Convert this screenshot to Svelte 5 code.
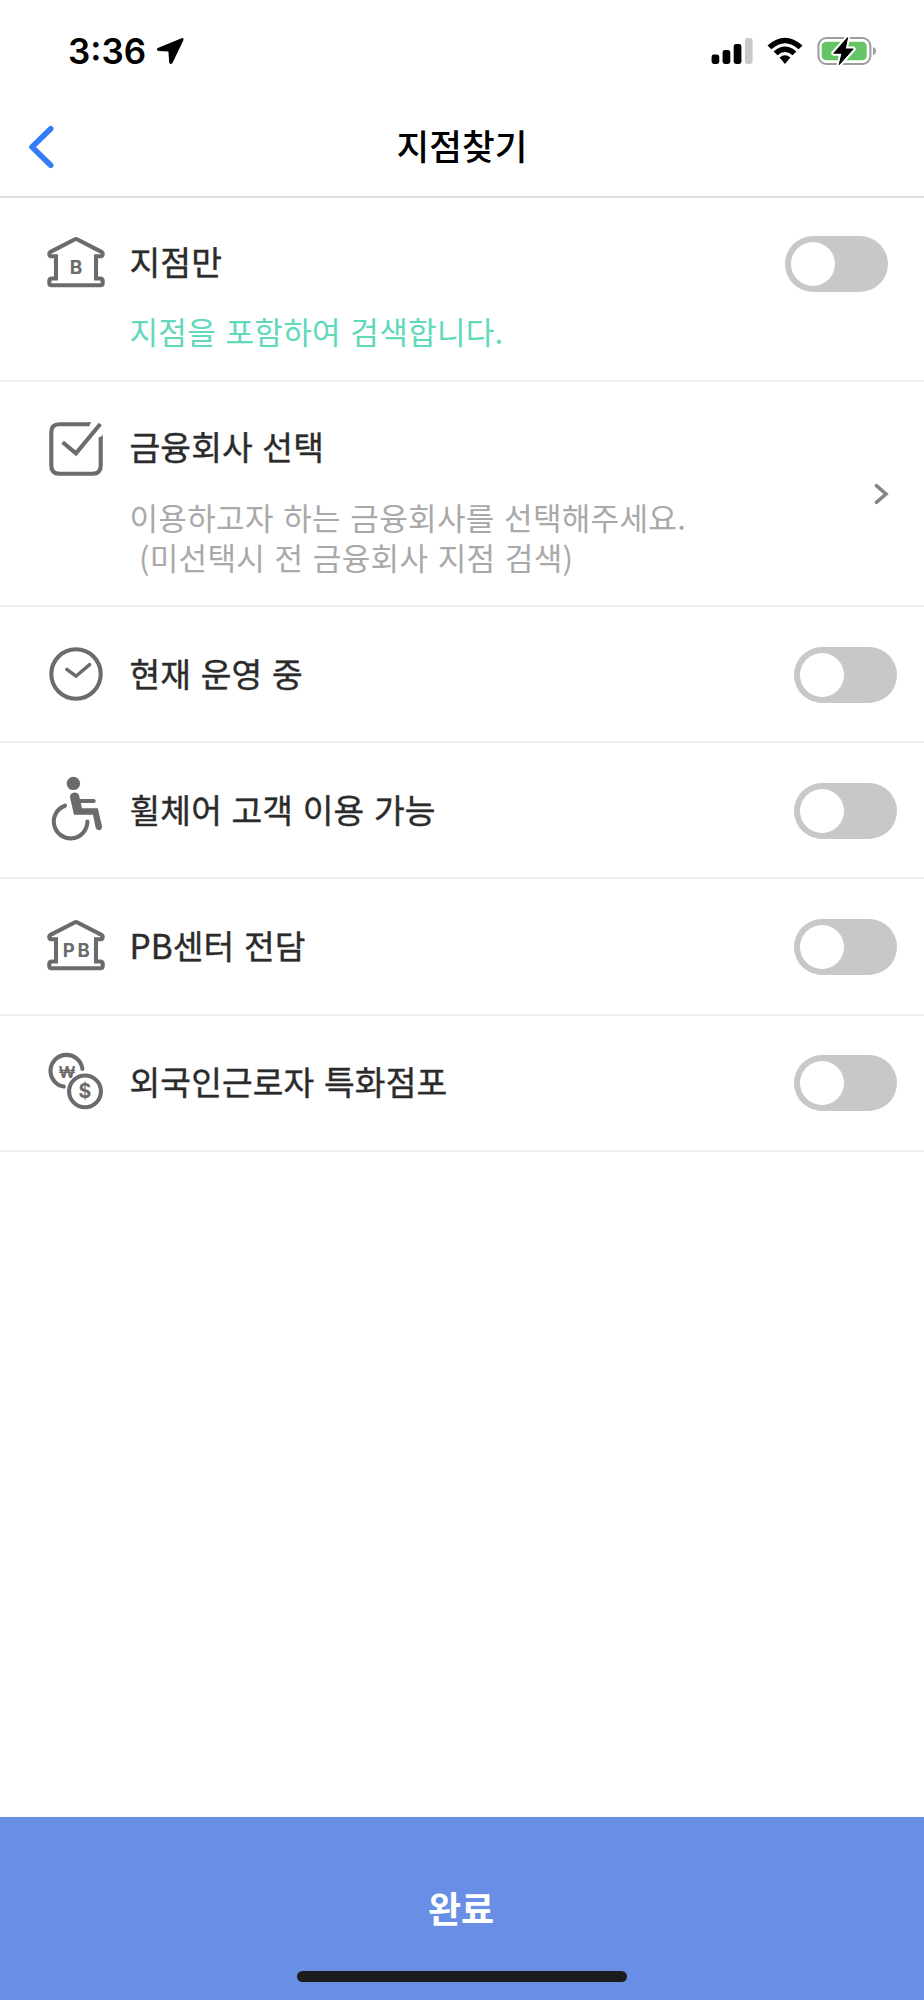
<script lang="ts">
    type Icon = 'branch' | 'check' | 'clock' | 'wheelchair' | 'pb' | 'coins';
    type Filter = { id: Icon; title: string; note?: string };

    const branch: Filter = { id: 'branch', title: '지점만', note: '지점을 포함하여 검색합니다.' };
    const filters: Filter[] = [
        { id: 'clock', title: '현재 운영 중' },
        { id: 'wheelchair', title: '휠체어 고객 이용 가능' },
        { id: 'pb', title: 'PB센터 전담' },
        { id: 'coins', title: '외국인근로자 특화점포' }
    ];

    let enabled: Record<string, boolean> = $state({});
</script>

{#snippet bank(label: string)}
    <path d="M33 8.3Q32 7.7 31 8.3L7 20.6Q5 21.8 5.3 23.5Q5.7 25.3 7.6 25.3H12V47.5H8Q5.3 47.5 5.3 50V52Q5.3 54.3 7.6 54.3H56.4Q58.7 54.3 58.7 52V50Q58.7 47.5 56 47.5H52V25.3H56.4Q58.3 25.3 58.7 23.5Q59 21.8 57 20.6Z" />
    <text class="bank-label" class:wide={label.length > 1} x={label.length > 1 ? 33.6 : 32} y="43.4">{label}</text>
{/snippet}

{#snippet icon(name: Icon)}
    <svg class="icon" viewBox="0 0 64 64" width="64" height="64" aria-hidden="true">
        {#if name === 'branch'}
            {@render bank('B')}
        {:else if name === 'pb'}
            {@render bank('PB')}
        {:else if name === 'check'}
            <path d="M45.6 7.3H15.3Q7.3 7.3 7.3 15.3V48.7Q7.3 56.7 15.3 56.7H48.7Q56.7 56.7 56.7 48.7V20" />
            <path class="solid" d="M44 5.3H47.6L44 9.3ZM58.7 17.6V22H54.7Z" />
            <path d="M18.6 25.2L32 36.4L56.3 7" />
        {:else if name === 'clock'}
            <circle cx="32" cy="32" r="24.7" />
            <path class="round thin" d="M22.8 27.4L32 34.2L45.6 22.6" />
        {:else if name === 'wheelchair'}
            <circle class="solid" cx="29.4" cy="5.4" r="6.7" />
            <path class="solid" d="M26 19.4Q25.8 15 30.4 14.4Q34.6 14.6 35.2 18L38 30.3H53.8L58 48.2Q58.2 51.4 55.4 52.2Q52.4 52.4 51.6 49.6L49 36.7H30Z" />
            <path class="round" d="M35 23H49.7" />
            <path class="round" d="M21 27.7A16.8 16.8 0 1 0 43.4 43.6" />
        {:else}
            <path class="round" d="M38.4 19A16 16 0 1 0 19.8 36.6" />
            <circle cx="41" cy="41.4" r="15.9" />
            <text class="won" x="23" y="27.8">₩</text>
            <text class="dollar" x="41" y="48.2">$</text>
        {/if}
    </svg>
{/snippet}

{#snippet toggle(item: Filter)}
    <button
        class="toggle"
        class:on={enabled[item.id]}
        role="switch"
        aria-checked={!!enabled[item.id]}
        aria-label={item.title}
        onclick={() => (enabled[item.id] = !enabled[item.id])}
    >
        <span class="knob"></span>
    </button>
{/snippet}

<div class="screen">
    <div class="status">
        <span class="time">3:36</span>
        <svg class="location" viewBox="0 0 28 28" width="28" height="28">
            <path d="M25.6 1.2L1.8 11Q-.4 13 2.4 14L12.4 14.4L13.2 25.4Q14.4 28.6 16.6 25.8L27.4 3.2Q28 .6 25.6 1.2Z" />
        </svg>
        <div class="indicators">
            <svg viewBox="0 0 42 28" width="42" height="28">
                <rect x=".6" y="17.5" width="7.7" height="9.5" rx="2.4" />
                <rect x="11.6" y="13" width="7.7" height="14" rx="2.4" />
                <rect x="22.7" y="7" width="7.7" height="20" rx="2.4" />
                <rect class="dim" x="33.9" y="1" width="7.7" height="26" rx="2.4" />
            </svg>
            <svg viewBox="0 0 36 28" width="36" height="28">
                <path d="M.5 8.4Q18-7 35.5 8.4L31.6 12.3Q18 .2 4.4 12.3Z" />
                <path d="M6.6 14.4Q18 4.4 29.4 14.4L25.5 18.3Q18 11.6 10.5 18.3Z" />
                <path d="M12.6 20.6Q18 16 23.4 20.6L18 26.9Z" />
            </svg>
            <svg viewBox="0 0 60 30" width="60" height="30">
                <rect class="shell" x="1.4" y="2" width="52" height="26" rx="8" />
                <rect class="charge" x="4.7" y="5.7" width="45" height="18.6" rx="4.5" />
                <path class="nub" d="M56 11Q59 12 59 15Q59 18 56 19Z" />
                <path class="bolt-edge" d="M30.6 1.6L16.8 17.2H25L22.2 28.6L36.2 13H28.2Z" />
                <path class="bolt" d="M30.6 1.6L16.8 17.2H25L22.2 28.6L36.2 13H28.2Z" />
            </svg>
        </div>
    </div>

    <header>
        <button class="back" aria-label="뒤로">
            <svg viewBox="0 0 28 44" width="28" height="44">
                <path d="M23.7 3.8L5 22L23.7 40.2" />
            </svg>
        </button>
        <h1>지점찾기</h1>
    </header>

    <main>
        <section class="row branch">
            {@render icon('branch')}
            <div class="body">
                <h2>{branch.title}</h2>
                <p class="accent">{branch.note}</p>
            </div>
            {@render toggle(branch)}
        </section>

        <section class="row company">
            {@render icon('check')}
            <div class="body">
                <h2>금융회사 선택</h2>
                <p>이용하고자 하는 금융회사를 선택해주세요.<br /><span class="second">(미선택시 전 금융회사 지점 검색)</span></p>
            </div>
            <svg class="chevron" viewBox="0 0 16 24" width="16" height="24">
                <path d="M3.4 3.6L13 12L3.4 20.4" />
            </svg>
        </section>

        {#each filters as item (item.id)}
            <section class="row">
                {@render icon(item.id)}
                <h2>{item.title}</h2>
                {@render toggle(item)}
            </section>
        {/each}
    </main>

    <footer>
        <button class="done">완료</button>
        <div class="home"></div>
    </footer>
</div>

<style>
    :global(body) {
        background: #fff;
    }

    .screen {
        display: flex;
        flex-direction: column;
        width: 924px;
        height: 2000px;
        background: #fff;
        color: #2b2b2b;
        font-family: "Noto Sans CJK KR", sans-serif;
    }

    button {
        padding: 0;
        border: 0;
        background: none;
        font-family: inherit;
    }

    svg {
        display: block;
        flex-shrink: 0;
    }

    h1, h2, p {
        margin: 0;
        white-space: nowrap;
    }

    /* Status bar */
    .status {
        box-sizing: border-box;
        display: flex;
        align-items: center;
        height: 100px;
        padding: 1px 47px 0 68px;
        color: #000;
    }

    .time {
        width: 88px;
        padding-top: 1px;
        font-family: Inter, sans-serif;
        font-size: 35px;
        font-weight: 600;
        line-height: 42px;
    }

    .indicators {
        display: flex;
        align-items: center;
        gap: 14px;
        margin-left: auto;
    }

    .dim {
        fill: #c9c9c9;
    }

    .shell {
        fill: none;
        stroke: #9d9d9d;
        stroke-width: 2;
    }

    .charge {
        fill: #65c466;
    }

    .nub {
        fill: #9d9d9d;
    }

    .bolt-edge {
        fill: #fff;
        stroke: #fff;
        stroke-width: 5;
        stroke-linejoin: round;
    }

    .bolt {
        stroke: #000;
        stroke-linejoin: round;
    }

    /* Title bar */
    header {
        box-sizing: border-box;
        display: grid;
        grid-template-columns: 72px 1fr 72px;
        align-items: center;
        height: 98px;
        padding-bottom: 2px;
        border-bottom: 2px solid #dedede;
    }

    .back {
        justify-self: start;
        margin-left: 27px;
    }

    .back path {
        fill: none;
        stroke: #347bf7;
        stroke-width: 5.6;
        stroke-linecap: round;
        stroke-linejoin: round;
    }

    h1 {
        padding-bottom: 4px;
        color: #000;
        font-size: 35.6px;
        font-weight: 500;
        line-height: 48px;
        text-align: center;
    }

    /* Filter rows */
    .row {
        box-sizing: border-box;
        display: flex;
        align-items: center;
        height: 136.2px;
        padding: 1px 27px 0 44px;
        border-bottom: 2px solid #f0f0f0;
    }

    .row.branch {
        align-items: flex-start;
        height: 184px;
        padding: 33px 36px 0 44px;
    }

    .row.branch .toggle {
        margin-top: 5px;
    }

    .row.company {
        height: 225px;
        padding-right: 35px;
    }

    .row.company .icon {
        align-self: flex-start;
        margin-top: 34px;
    }

    .row.company .body {
        align-self: flex-start;
        padding-top: 33px;
    }

    .icon {
        overflow: visible;
        margin: 0 21.5px 2px 0;
        fill: none;
        stroke: #6b6b6b;
        stroke-width: 4.1;
    }

    .round {
        stroke-linecap: round;
    }

    .thin {
        stroke-width: 3.4;
    }

    .solid {
        fill: #6b6b6b;
        stroke: none;
    }

    .icon text {
        fill: #6b6b6b;
        stroke: none;
        font-family: Inter, sans-serif;
        font-weight: 700;
        text-anchor: middle;
    }

    .bank-label {
        font-size: 19px;
    }

    .wide {
        font-size: 18.5px;
        letter-spacing: 2.8px;
    }

    .icon .won {
        font-size: 16.5px;
    }

    .icon .dollar {
        font-size: 19.5px;
    }

    h2 {
        padding-bottom: 5px;
        font-size: 33.4px;
        font-weight: 400;
        letter-spacing: 0.1px;
        line-height: 59px;
        word-spacing: 2px;
        -webkit-text-stroke: 0.4px currentColor;
    }

    p {
        color: #a9a9a9;
        font-size: 31.1px;
        font-weight: 400;
        letter-spacing: 0.25px;
        line-height: 40px;
        word-spacing: 2.2px;
    }

    .row.company p {
        margin-top: 17px;
    }

    .second {
        padding-left: 9.5px;
    }

    p.accent {
        margin-top: 16px;
        color: #61d8b9;
    }

    .toggle {
        box-sizing: border-box;
        flex-shrink: 0;
        width: 102.6px;
        height: 56px;
        margin-left: auto;
        padding: 6px;
        border-radius: 28px;
        background: #c8c8c8;
    }

    .toggle.on {
        background: #698ee5;
    }

    .knob {
        display: block;
        width: 44px;
        height: 44px;
        border-radius: 50%;
        background: #fff;
    }

    .on .knob {
        margin-left: auto;
    }

    .chevron {
        margin-left: auto;
        fill: none;
        stroke: #858585;
        stroke-width: 3.6;
        stroke-linecap: round;
    }

    /* Bottom action */
    footer {
        box-sizing: border-box;
        display: flex;
        flex-direction: column;
        align-items: center;
        justify-content: space-between;
        height: 183px;
        margin-top: auto;
        padding: 63px 0 18px;
        background: #698ee5;
    }

    .done {
        padding-right: 2px;
        color: #fff;
        font-size: 36px;
        font-weight: 700;
        line-height: 54px;
    }

    .home {
        width: 330px;
        height: 11px;
        border-radius: 6px;
        background: #1c1c1c;
    }
</style>
